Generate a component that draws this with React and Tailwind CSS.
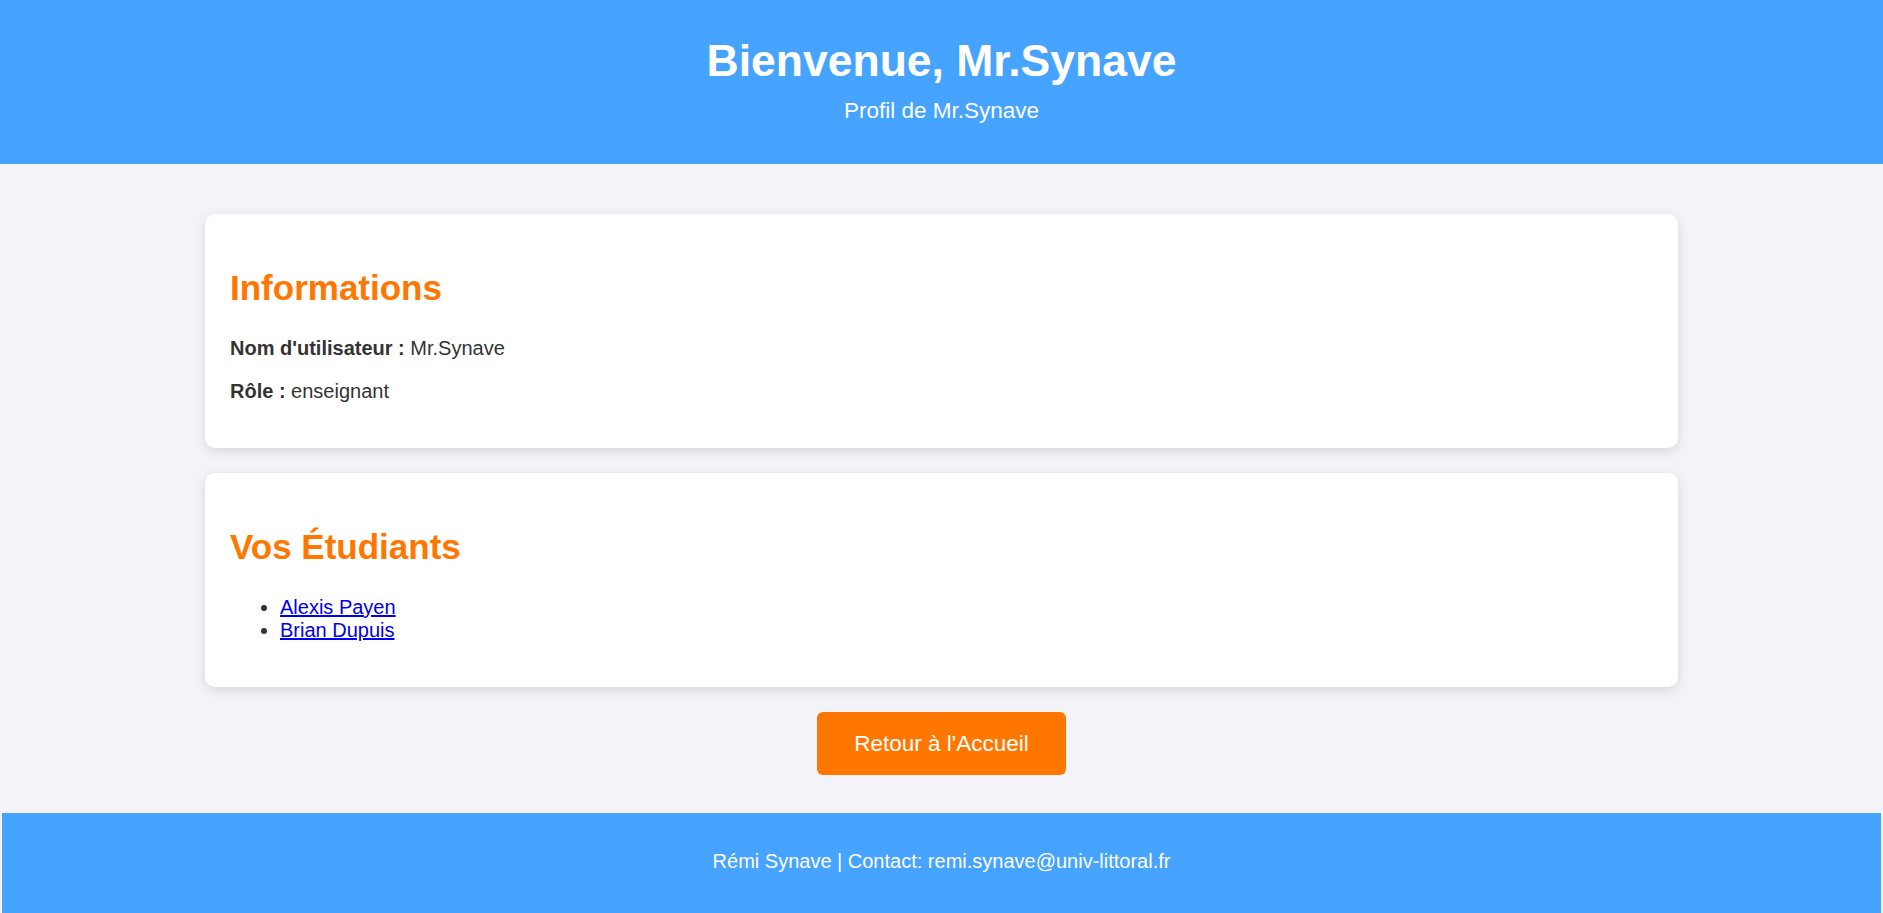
import React from 'react'

const STUDENTS = ['Alexis Payen', 'Brian Dupuis']

function Card({ title, children }) {
  return (
    <section className="bg-white rounded-[10px] shadow-[0_3px_12px_rgba(0,0,0,0.12)] px-[25px] py-[25px] mb-[25px]">
      <h2 className="text-[35px] font-bold text-[#ff7700] leading-[40px] mt-[29px] mb-[29px]">{title}</h2>
      {children}
    </section>
  )
}

export default function App() {
  return (
    <div className="min-h-screen bg-[#f4f4f8] text-[#333] text-[20px] font-['Liberation_Sans',Arial,sans-serif] flex flex-col">
      {/* Header */}
      <header className="bg-[#46a3ff] text-white text-center pt-[36px] pb-[40px]">
        <h1 className="text-[44.5px] font-bold leading-[50px]">Bienvenue, Mr.Synave</h1>
        <p className="text-[22.5px] leading-[26px] mt-[12px]">Profil de Mr.Synave</p>
      </header>

      {/* Content */}
      <main className="w-[1473px] mx-auto pt-[50px]">
        <Card title="Informations">
          <p className="leading-[23px] mb-[20px]">
            <strong>Nom d'utilisateur :</strong> Mr.Synave
          </p>
          <p className="leading-[23px] mb-[20px]">
            <strong>Rôle :</strong> enseignant
          </p>
        </Card>

        <Card title="Vos Étudiants">
          <ul className="list-disc pl-[50px] leading-[23px] mb-[20px]">
            {STUDENTS.map((name) => (
              <li key={name}>
                <a href="#" className="text-[#0000ee] underline">{name}</a>
              </li>
            ))}
          </ul>
        </Card>

        <div className="flex justify-center">
          <a href="#" className="bg-[#ff7700] text-white text-[22.5px] leading-[26px] px-[37px] py-[18.5px] rounded-[6px]">
            Retour à l'Accueil
          </a>
        </div>
      </main>

      {/* Footer */}
      <footer className="bg-[#46a3ff] text-white text-center mx-[2px] mt-[38px] pt-[37px] pb-[42px] leading-[23px]">
        Rémi Synave | Contact: remi.synave@univ-littoral.fr
      </footer>
    </div>
  )
}
